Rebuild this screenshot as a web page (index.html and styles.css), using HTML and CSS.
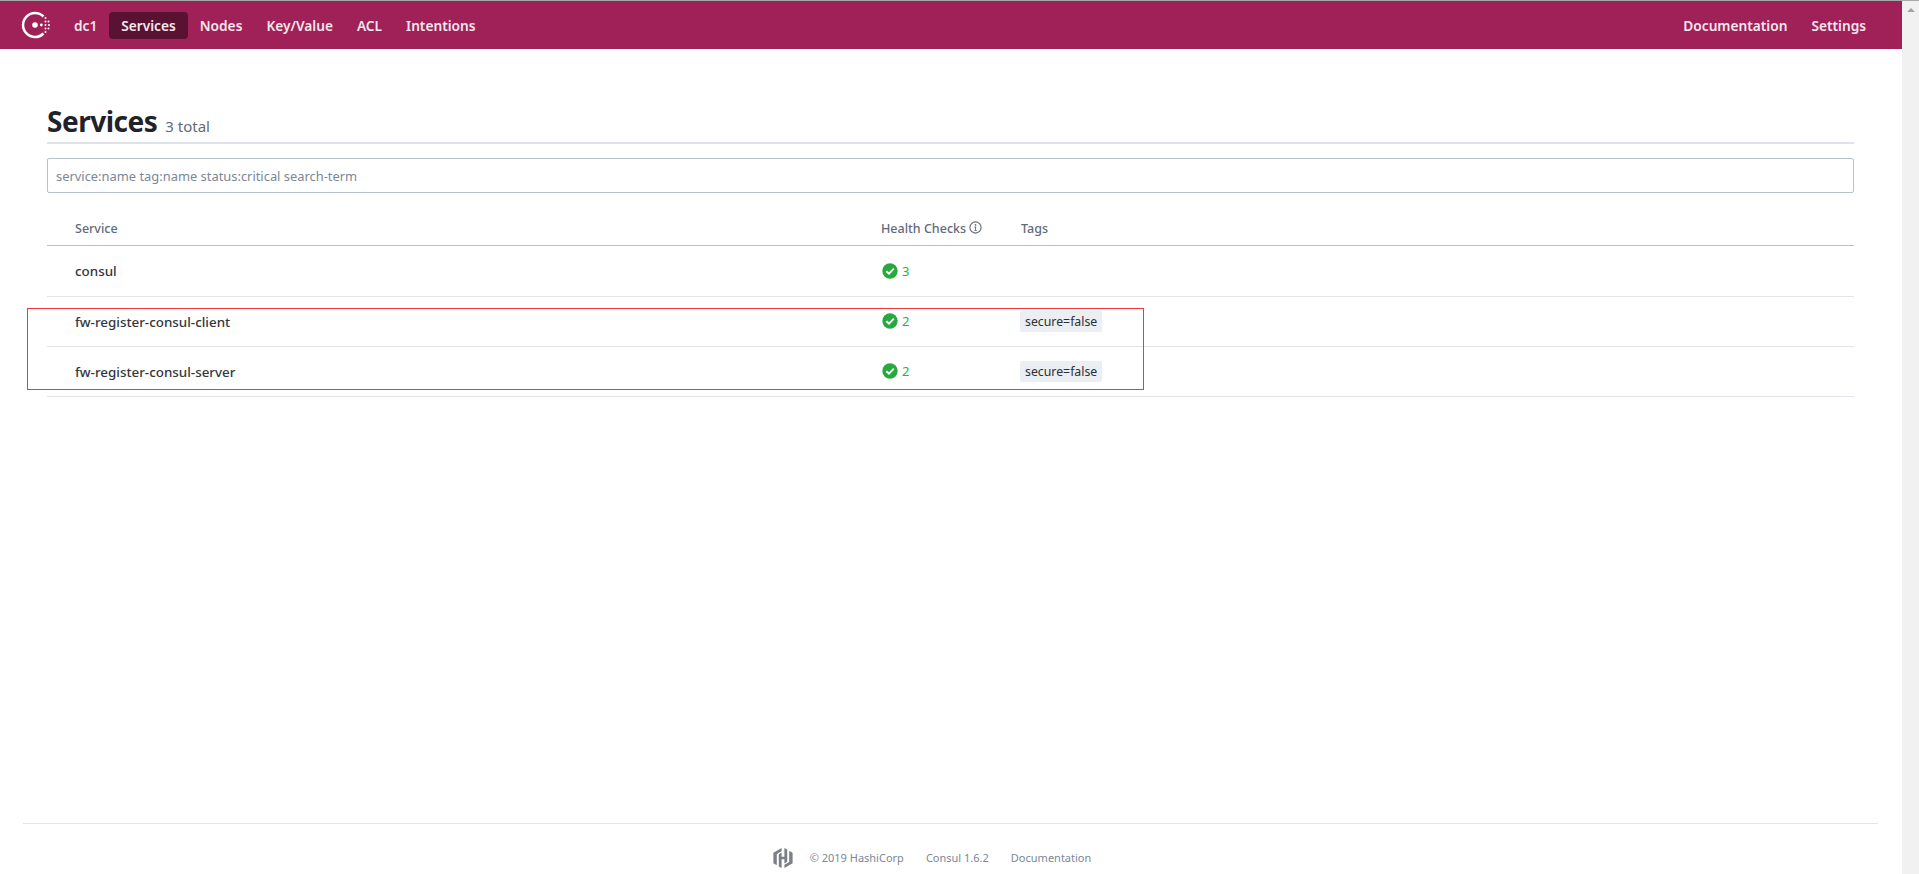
FILE: index.html
```html
<!DOCTYPE html>
<html lang="en">
<head>
    <meta charset="UTF-8">
    <meta name="viewport" content="width=device-width, initial-scale=1.0">
    <title>Services - Consul</title>
    <link rel="stylesheet" href="styles.css">
</head>
<body>
    <div class="window">
        <div class="page">
            <header class="topbar">
                <nav class="nav">
                    <a class="logo" href="#" aria-label="Consul">
                        <svg width="30" height="30" viewBox="0 0 30 30" fill="#fff">
                            <path d="M22.5 6.5A12 12 0 1 0 22.5 23.5" fill="none" stroke="#fff" stroke-width="2.5"/>
                            <circle cx="14" cy="15" r="2.8"/>
                            <circle cx="20.3" cy="15" r="1.4"/>
                            <circle cx="24.5" cy="11.5" r="1"/>
                            <circle cx="27.5" cy="11.5" r="1"/>
                            <circle cx="24.5" cy="15" r="1"/>
                            <circle cx="28" cy="15" r="1"/>
                            <circle cx="24.5" cy="18.5" r="1"/>
                            <circle cx="27.5" cy="18.5" r="1"/>
                            <circle cx="24.5" cy="8" r="1"/>
                            <circle cx="24.5" cy="22" r="1"/>
                        </svg>
                    </a>
                    <a class="nav-link" href="#">dc1</a>
                    <a class="nav-link active" href="#">Services</a>
                    <a class="nav-link" href="#">Nodes</a>
                    <a class="nav-link" href="#">Key/Value</a>
                    <a class="nav-link" href="#">ACL</a>
                    <a class="nav-link" href="#">Intentions</a>
                </nav>
                <nav class="nav nav-right">
                    <a class="nav-link" href="#">Documentation</a>
                    <a class="nav-link" href="#">Settings</a>
                </nav>
            </header>

            <main class="content">
                <div class="title-row">
                    <h1>Services</h1>
                    <span class="total">3 total</span>
                </div>

                <input class="search" type="text" placeholder="service:name tag:name status:critical search-term">

                <table class="services">
                    <thead>
                        <tr>
                            <th class="col-name">Service</th>
                            <th class="col-health">
                                Health Checks
                                <svg class="info" width="13" height="13" viewBox="0 0 13 13">
                                    <circle cx="6.5" cy="6.5" r="5.6" fill="none" stroke="#5f6a7c" stroke-width="1.1"/>
                                    <circle cx="6.5" cy="3.8" r="0.9" fill="#5f6a7c"/>
                                    <path d="M5.4 5.6h1.7v3.4h0.8v0.8H5.2V9h0.9V6.4h-0.7z" fill="#5f6a7c"/>
                                </svg>
                            </th>
                            <th>Tags</th>
                        </tr>
                    </thead>
                    <tbody>
                        <tr>
                            <td class="name">consul</td>
                            <td>
                                <span class="health">
                                    <svg width="16" height="16" viewBox="0 0 16 16"><circle cx="8" cy="8" r="7.7" fill="#28a93e"/><path d="M4.4 8.2l2.6 2.5 4.8-5" fill="none" stroke="#fff" stroke-width="1.9"/></svg>
                                    3
                                </span>
                            </td>
                            <td></td>
                        </tr>
                        <tr>
                            <td class="name">fw-register-consul-client</td>
                            <td>
                                <span class="health">
                                    <svg width="16" height="16" viewBox="0 0 16 16"><circle cx="8" cy="8" r="7.7" fill="#28a93e"/><path d="M4.4 8.2l2.6 2.5 4.8-5" fill="none" stroke="#fff" stroke-width="1.9"/></svg>
                                    2
                                </span>
                            </td>
                            <td><span class="tag">secure=false</span></td>
                        </tr>
                        <tr>
                            <td class="name">fw-register-consul-server</td>
                            <td>
                                <span class="health">
                                    <svg width="16" height="16" viewBox="0 0 16 16"><circle cx="8" cy="8" r="7.7" fill="#28a93e"/><path d="M4.4 8.2l2.6 2.5 4.8-5" fill="none" stroke="#fff" stroke-width="1.9"/></svg>
                                    2
                                </span>
                            </td>
                            <td><span class="tag">secure=false</span></td>
                        </tr>
                    </tbody>
                </table>
            </main>

            <footer class="footer">
                <svg class="hashi" width="20" height="20" viewBox="0 0 20 20" fill="#7b7f86">
                    <path d="M8.6 0L0.4 4.7v10.6l3.4 2V6l4.8-2.8z"/>
                    <path d="M11.4 20l8.2-4.7V4.7l-3.4-2V14l-4.8 2.8z"/>
                    <path d="M5.8 6.2l2.8-1.6v4.2h2.8V0l2.8 1.6v12.2l-2.8 1.6v-4.2H8.6V20l-2.8-1.6z"/>
                </svg>
                <span>&copy; 2019 HashiCorp</span>
                <a href="#">Consul 1.6.2</a>
                <a href="#">Documentation</a>
            </footer>

            <!-- red box somebody drew on the screenshot -->
            <div class="annotation"></div>
        </div>
        <div class="scrollbar"><span class="arrow-up"></span></div>
    </div>
</body>
</html>
```

FILE: styles.css
```css
* {
    box-sizing: border-box;
}
html, body {
    height: 100%;
    margin: 0;
    overflow: hidden;
}
body {
    font-family: "Noto Sans", "Open Sans", sans-serif;
    font-size: 13.4px;
    color: #1f2229;
    background: #fff;
    border-top: 1px solid #a8a8a8;
}
a {
    color: inherit;
    text-decoration: none;
}
.window {
    display: flex;
    height: 100%;
}
.page {
    position: relative;
    flex: 1;
    display: flex;
    flex-direction: column;
    min-width: 0;
}
.scrollbar {
    width: 17px;
    background: #f1f1f1;
    display: flex;
    justify-content: center;
    padding-top: 7px;
}
.arrow-up {
    width: 0;
    height: 0;
    border-left: 4px solid transparent;
    border-right: 4px solid transparent;
    border-bottom: 4px solid #a3a3a3;
}
.topbar {
    display: flex;
    justify-content: space-between;
    align-items: center;
    height: 48px;
    background: #a02157;
    padding: 0 24px 0 21px;
}
.nav {
    display: flex;
    align-items: center;
}
.logo {
    display: flex;
    width: 41px;
    margin-top: -1px;
}
.nav-link {
    color: #f4e7ee;
    font-size: 13.7px;
    font-weight: 600;
    line-height: 27px;
    height: 27px;
    padding: 0 12px;
    border-radius: 4px;
}
.active {
    background: #5a1232;
}
.content {
    flex: 1;
    padding: 0 48px 0 47px;
}
.title-row {
    display: flex;
    align-items: baseline;
    gap: 8px;
    height: 95px;
    padding-top: 54px;
    border-bottom: 2px solid #dfe2e8;
}
h1 {
    margin: 0;
    font-size: 28px;
    font-weight: 700;
    line-height: 36px;
    letter-spacing: -0.5px;
    color: #1f2229;
}
.total {
    font-size: 15px;
    color: #5f6a7c;
}
.search {
    display: block;
    width: 100%;
    height: 35px;
    margin-top: 14px;
    padding: 0 8px;
    font-family: inherit;
    font-size: 12.9px;
    border: 1px solid #bac1cd;
    border-radius: 2px;
    outline: none;
}
.search::placeholder {
    color: #7c8797;
    opacity: 1;
}
.services {
    width: 100%;
    margin-top: 16px;
    border-collapse: collapse;
    table-layout: fixed;
}
.services th {
    height: 36px;
    padding: 3px 0 0;
    font-size: 12.5px;
    font-weight: 500;
    text-align: left;
    color: #5f6a7c;
    border-bottom: 1px solid #bac1cd;
}
.services td {
    height: 50px;
    padding: 0;
    border-bottom: 1px solid #e1e4e9;
}
.services tbody tr:first-child td {
    height: 51px;
}
.services th.col-name {
    width: 834px;
    padding-left: 28px;
}
.col-health {
    width: 140px;
}
.info {
    vertical-align: -1px;
}
.services td.name {
    padding: 1px 0 0 28px;
    font-weight: 500;
    color: #33363d;
}
.health {
    display: flex;
    align-items: center;
    gap: 4px;
    margin-left: 1px;
    font-size: 13px;
    color: #2eb039;
}
.tag {
    display: inline-block;
    margin-left: -1px;
    padding: 1px 5px;
    font-size: 12.3px;
    line-height: 19px;
    color: #2c2f36;
    background: #ebeef2;
    border-radius: 2px;
}
.footer {
    display: flex;
    justify-content: center;
    align-items: center;
    gap: 22px;
    height: 51px;
    margin: 0 24px 0 23px;
    padding: 17px 37px 0 0;
    font-size: 11px;
    color: #7c8797;
    border-top: 1px solid #e1e4e9;
}
.hashi {
    margin-right: -5px;
}
.annotation {
    position: absolute;
    left: 27px;
    top: 307px;
    width: 1117px;
    height: 82px;
    border: 1px solid #f0393c;
    pointer-events: none;
}
```
